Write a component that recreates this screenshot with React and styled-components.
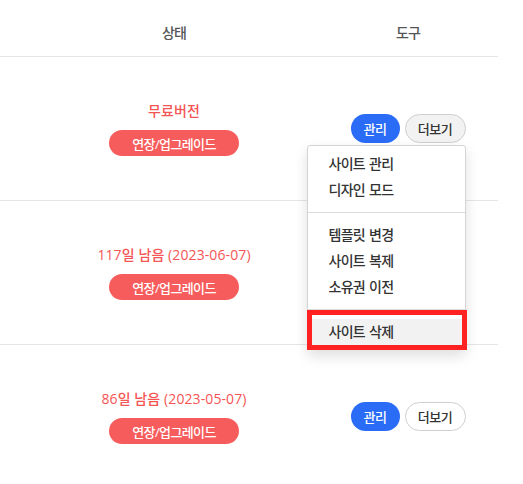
import React from 'react';
import styled, { createGlobalStyle } from 'styled-components';

const rows = [
  { status: '무료버전', open: true },
  { status: '117일 남음 (2023-06-07)' },
  { status: '86일 남음 (2023-05-07)' },
];

const menuGroups = [
  ['사이트 관리', '디자인 모드'],
  ['템플릿 변경', '사이트 복제', '소유권 이전'],
];

const App = () => {
  return (
    <>
      <GlobalStyle />
      <Table>
        <HeadRow>
          <span />
          <HeadCell>상태</HeadCell>
          <HeadCell>도구</HeadCell>
        </HeadRow>
        {rows.map((row, i) => (
          <BodyRow key={i}>
            <span />
            <StatusCell>
              <StatusText>{row.status}</StatusText>
              <UpgradeButton>연장/업그레이드</UpgradeButton>
            </StatusCell>
            <ToolCell>
              <ToolGroup>
                <ManageButton>관리</ManageButton>
                <MoreButton $active={row.open}>더보기</MoreButton>
                {row.open ? (
                  <Menu>
                    {menuGroups.map((group, g) => (
                      <MenuGroup key={g}>
                        {group.map((label) => (
                          <MenuItem key={label}>{label}</MenuItem>
                        ))}
                      </MenuGroup>
                    ))}
                    <MenuGroup>
                      <MenuItem $hover>사이트 삭제</MenuItem>
                    </MenuGroup>
                    <Highlight />
                  </Menu>
                ) : null}
              </ToolGroup>
            </ToolCell>
          </BodyRow>
        ))}
      </Table>
    </>
  );
};

const GlobalStyle = createGlobalStyle`
  body {
    margin: 0;
    background: #ffffff;
    font-family: "Open Sans", "Noto Sans CJK KR", sans-serif;
  }
`;

const Table = styled.div`
  width: 498px;
  display: flex;
  flex-direction: column;
`;

const HeadRow = styled.div`
  display: grid;
  grid-template-columns: 30px 248px 180px;
  column-gap: 20px;
  height: 56px;
  border-bottom: 1px solid #e6e6e6;
`;

const HeadCell = styled.div`
  padding-top: 24px;
  text-align: center;
  font-size: 14px;
  font-weight: 500;
  line-height: 18px;
  letter-spacing: -1px;
  color: #555;
`;

const BodyRow = styled.div`
  display: grid;
  grid-template-columns: 30px 248px 180px;
  column-gap: 20px;
  align-items: center;
  height: 143px;
  border-bottom: 1px solid #e6e6e6;
`;

const StatusCell = styled.div`
  display: flex;
  flex-direction: column;
  align-items: center;
  gap: 9px;
`;

const StatusText = styled.div`
  font-size: 14px;
  font-weight: 500;
  line-height: 20px;
  letter-spacing: 0.1px;
  color: #f55555;
`;

const UpgradeButton = styled.button`
  width: 130px;
  height: 26px;
  border: none;
  border-radius: 13px;
  background: #f75c5c;
  color: #fff;
  font-family: inherit;
  font-size: 13px;
  font-weight: 500;
  letter-spacing: -0.6px;
  padding: 0;
`;

const ToolCell = styled.div`
  display: flex;
  justify-content: center;
`;

const ToolGroup = styled.div`
  position: relative;
  display: flex;
  gap: 5px;
`;

const ManageButton = styled.button`
  width: 49px;
  height: 29px;
  border: none;
  border-radius: 15px;
  background: #2b6cf6;
  color: #fff;
  font-family: inherit;
  font-size: 13px;
  font-weight: 500;
  letter-spacing: -0.5px;
  padding: 0;
`;

const MoreButton = styled.button`
  width: 61px;
  height: 29px;
  border: 1px solid #cfcfcf;
  border-radius: 15px;
  background: ${(p) => (p.$active ? '#f2f2f2' : '#ffffff')};
  color: #333;
  font-family: inherit;
  font-size: 13px;
  font-weight: 500;
  letter-spacing: -0.5px;
  padding: 0;
`;

const Menu = styled.div`
  position: absolute;
  right: 0;
  top: calc(100% + 2px);
  width: 159px;
  box-sizing: border-box;
  padding: 5px 0 4px;
  background: #fff;
  border: 1px solid #d4d4d4;
  border-radius: 3px;
  box-shadow: 0 6px 14px rgba(0, 0, 0, 0.13);
  z-index: 2;
`;

const MenuGroup = styled.div`
  & + & {
    border-top: 1px solid #dcdcdc;
    margin-top: 9px;
    padding-top: 9px;
  }
`;

const MenuItem = styled.div`
  height: 26px;
  line-height: 26px;
  padding-left: 21px;
  font-size: 14px;
  font-weight: 500;
  letter-spacing: -0.7px;
  word-spacing: 1px;
  color: #333;
  background: ${(p) => (p.$hover ? '#f2f2f2' : 'transparent')};
`;

const Highlight = styled.div`
  position: absolute;
  left: -1px;
  top: 164px;
  width: 160px;
  height: 40px;
  box-sizing: border-box;
  border: 5px solid #ff2222;
  pointer-events: none;
`;

export default App;
